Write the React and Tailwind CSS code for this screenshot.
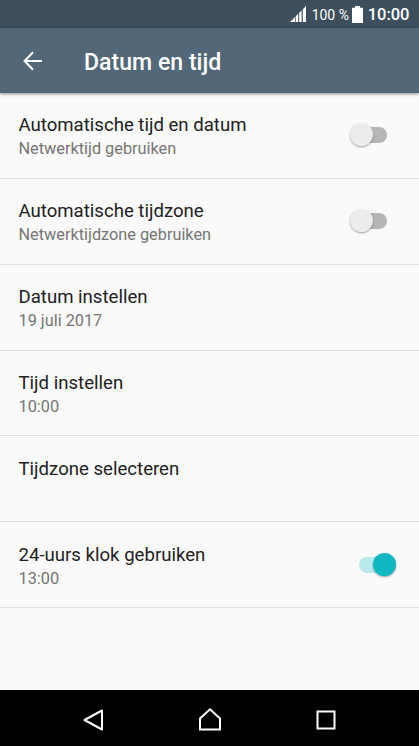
const settings = [
  { title: 'Automatische tijd en datum', subtitle: 'Netwerktijd gebruiken', checked: false },
  { title: 'Automatische tijdzone', subtitle: 'Netwerktijdzone gebruiken', checked: false },
  { title: 'Datum instellen', subtitle: '19 juli 2017' },
  { title: 'Tijd instellen', subtitle: '10:00' },
  { title: 'Tijdzone selecteren' },
  { title: '24-uurs klok gebruiken', subtitle: '13:00', checked: true },
];

const StatusBar = () => (
  <div className="flex h-7 items-center justify-end bg-[#3d4f5c] pr-[9.5px] text-white">
    <svg className="mr-[6px] h-4 w-4" viewBox="0 0 16 16" fill="white">
      <path d="M0 16l5-5v5zM5.7 16v-5.7L8.2 7.8V16zM9.2 16V6.8l2.4-2.4V16zM12.8 16V3.2L16 0v16z" />
    </svg>
    <span className="mr-[3px] w-[37px] whitespace-nowrap pt-0.5 text-[14px] leading-none">100 %</span>
    <svg className="mr-[5px] h-[17px] w-[11px]" viewBox="0 0 11 17" fill="white">
      <path d="M3 0h5v1.8h3V17H0V1.8h3z" />
    </svg>
    <span className="pt-[3px] text-[16.5px] font-medium leading-none">10:00</span>
  </div>
);

const Header = () => (
  <div className="relative flex h-[65px] items-center bg-[#526878] pl-[23px] shadow-[0_1px_3px_rgba(0,0,0,0.45)]">
    <svg className="h-5 w-5" viewBox="0 0 20 20" fill="none" stroke="white" strokeWidth="2">
      <path d="M19 10H2M10 1.3L1.6 10l8.4 8.7" />
    </svg>
    <h1 className="ml-[41px] pt-[4px] text-[23.1px] font-medium leading-none text-white">Datum en tijd</h1>
  </div>
);

const Switch = ({ checked }) => (
  <div className="relative h-6 w-[46px]">
    <div className={`absolute left-[9px] top-[4px] h-[16px] w-[28px] rounded-full ${checked ? 'bg-[#b9eaed]' : 'bg-[#b6b6b6]'}`} />
    <div
      className={`absolute top-0 h-[23px] w-[23px] rounded-full shadow-[0_1px_2px_rgba(0,0,0,0.35)] ${
        checked ? 'right-0 bg-[#10b8c3]' : 'left-0 bg-[#ececec]'
      }`}
    />
  </div>
);

const SettingRow = ({ title, subtitle, checked }) => (
  <div className="flex h-[85.85px] justify-between border-b border-[#dedede] pl-[18.5px] pr-[23px]">
    <div className="pt-[20.3px]">
      <div className="text-[18.6px] leading-6 text-[#212121]">{title}</div>
      {subtitle && <div className="text-[16.3px] leading-6 text-[#757575]">{subtitle}</div>}
    </div>
    {checked !== undefined && (
      <div className="pt-[30.4px]">
        <Switch checked={checked} />
      </div>
    )}
  </div>
);

const NavBar = () => (
  <div className="flex h-14 items-center justify-between bg-black pl-[82px] pr-[81px] pt-[3px]">
    <svg className="h-6 w-6" viewBox="0 0 24 24" fill="none" stroke="white" strokeWidth="2">
      <path d="M20 2.5v19L2.5 12z" strokeLinejoin="round" />
    </svg>
    <svg className="h-6 w-6" viewBox="0 0 24 24" fill="none" stroke="white" strokeWidth="2">
      <path d="M2 21.5V10.5L12 1.3l10 9.2v11z" />
    </svg>
    <svg className="h-6 w-6" viewBox="0 0 24 24" fill="none" stroke="white" strokeWidth="2">
      <rect x="3.5" y="3.5" width="17" height="17" />
    </svg>
  </div>
);

const App = () => (
  <div className="flex h-[746px] w-[419px] flex-col overflow-hidden bg-[#fafafa] font-['Roboto',sans-serif]">
    <StatusBar />
    <Header />
    <div className="flex-1">
      {settings.map((item) => (
        <SettingRow key={item.title} {...item} />
      ))}
    </div>
    <NavBar />
  </div>
);

export default App;
